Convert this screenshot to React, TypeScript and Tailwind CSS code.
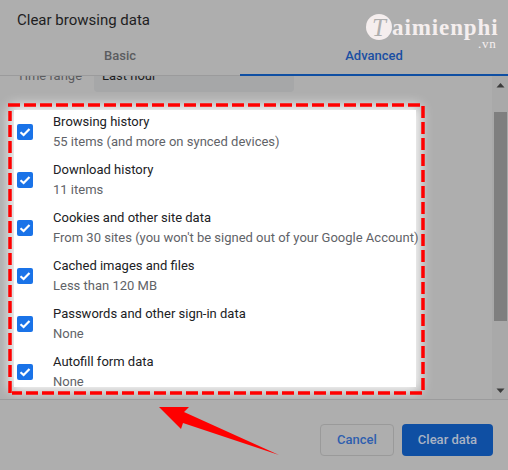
import React from "react";

const rows = [
  ["Browsing history", "55 items (and more on synced devices)"],
  ["Download history", "11 items"],
  ["Cookies and other site data", "From 30 sites (you won't be signed out of your Google Account)"],
  ["Cached images and files", "Less than 120 MB"],
  ["Passwords and other sign-in data", "None"],
  ["Autofill form data", "None"],
];

function Box() {
  return (
    <div className="w-4 h-4 rounded-[2px] bg-[#1a73e8] flex items-center justify-center shrink-0">
      <svg width="12" height="12" viewBox="0 0 12 12" fill="none">
        <path d="M1.5 6.2 L4.6 9 L10.5 3" stroke="#fff" strokeWidth="2.2" />
      </svg>
    </div>
  );
}

export default function App() {
  return (
    <div className="relative w-[508px] h-[470px] overflow-hidden bg-[#aeaeae] text-[13px] font-['Roboto',sans-serif]">
      {/* header */}
      <div className="h-[40px] pl-[17px] pt-[9px] text-[15px] leading-[22px] text-[#1e1e1f]">Clear browsing data</div>
      <div className="h-[36px] flex border-b border-[#9b9b9c]">
        <div className="w-[240px] flex items-start justify-center pt-[5px] font-medium text-[#5b5c5f] leading-[22px]">Basic</div>
        <div className="flex-1 flex items-start justify-center pt-[5px] font-medium text-[#1a4fa3] leading-[22px] border-b-2 border-[#0f4fa3] mb-[-1px]">Advanced</div>
      </div>

      {/* scroll area */}
      <div className="h-[324px] flex overflow-hidden border-b border-[#9b9b9c]">
        <div className="flex-1 overflow-hidden">
          <div className="flex items-center h-[32px] mt-[-16px] pl-[17px] text-[#5b5c5f] whitespace-nowrap">
            <span className="w-[77px]">Time range</span>
            <div className="w-[200px] h-[32px] bg-[#a6a7a8] rounded-[4px] px-2 text-[#1e1e1f] leading-[32px]">Last hour</div>
          </div>
          <div className="mt-[18px] ml-[14px] mr-[76px] h-[277px] bg-white shadow-[0_0_12px_4px_rgba(255,255,255,0.95)] pl-[3px] pt-px">
            <div className="mt-[-3px]">
              {rows.map(([a, b]) => (
                <div key={a} className="h-[48px] flex items-center">
                  <Box />
                  <div className="ml-[20px] whitespace-nowrap">
                    <div className="leading-[20px] text-[#202124]">{a}</div>
                    <div className="leading-[20px] text-[#5f6368]">{b}</div>
                  </div>
                </div>
              ))}
            </div>
          </div>
        </div>
        <div className="w-[16px] flex flex-col items-center bg-[#a9a9a9]">
          <svg width="9" height="6" viewBox="0 0 9 6" className="mt-[6px]"><path d="M0.5 5.5 L4.5 1 L8.5 5.5Z" fill="#3c3c3c" /></svg>
          <div className="w-[13px] h-[209px] ml-[1px] mt-[24px] bg-[#7f7f7f]"></div>
          <svg width="9" height="6" viewBox="0 0 9 6" className="mt-auto mb-[5px]"><path d="M0.5 0.5 L4.5 5 L8.5 0.5Z" fill="#3c3c3c" /></svg>
        </div>
      </div>

      {/* footer */}
      <div className="flex justify-end gap-2 pt-[24px] pr-[15px]">
        <button className="w-[74px] h-[32px] rounded-[4px] border border-[#9a9a9a] font-medium text-[#2f5fae]">Cancel</button>
        <button className="w-[91px] h-[32px] rounded-[4px] bg-[#0f4fa3] font-medium text-[#a9b3c4]">Clear data</button>
      </div>

      {/* red highlight */}
      <svg className="absolute left-0 top-0" width="508" height="470" fill="none">
        <path d="M8 105 H423 V393 H12" stroke="#ff0000" strokeWidth="3.5" strokeDasharray="12 4" />
        <path d="M10 393 V111" stroke="#ff0000" strokeWidth="3.5" strokeDasharray="12 4" />
        <path d="M159 407 L189 407 L184 412 L279 455 L183 423 L181 429 Z" fill="#ff0000" />
      </svg>

      {/* watermark */}
      <div className="absolute left-[366px] top-[14px] flex items-start text-[#f5eeee]">
        <div className="w-[26px] h-[26px] rounded-full bg-[#f5eeee] flex items-center justify-center font-['Liberation_Serif',serif] italic text-[25px] leading-none text-[#aeaeae]">T</div>
        <span className="font-['Liberation_Serif',serif] text-[23px] leading-[20px] mt-[4px] font-bold tracking-[0.9px]">aimienphi</span>
      </div>
      <div className="absolute left-[478px] top-[39px] font-['Liberation_Serif',serif] text-[13px] leading-[10px] tracking-[0.8px] text-[#f5eeee]">.vn</div>
    </div>
  );
}
